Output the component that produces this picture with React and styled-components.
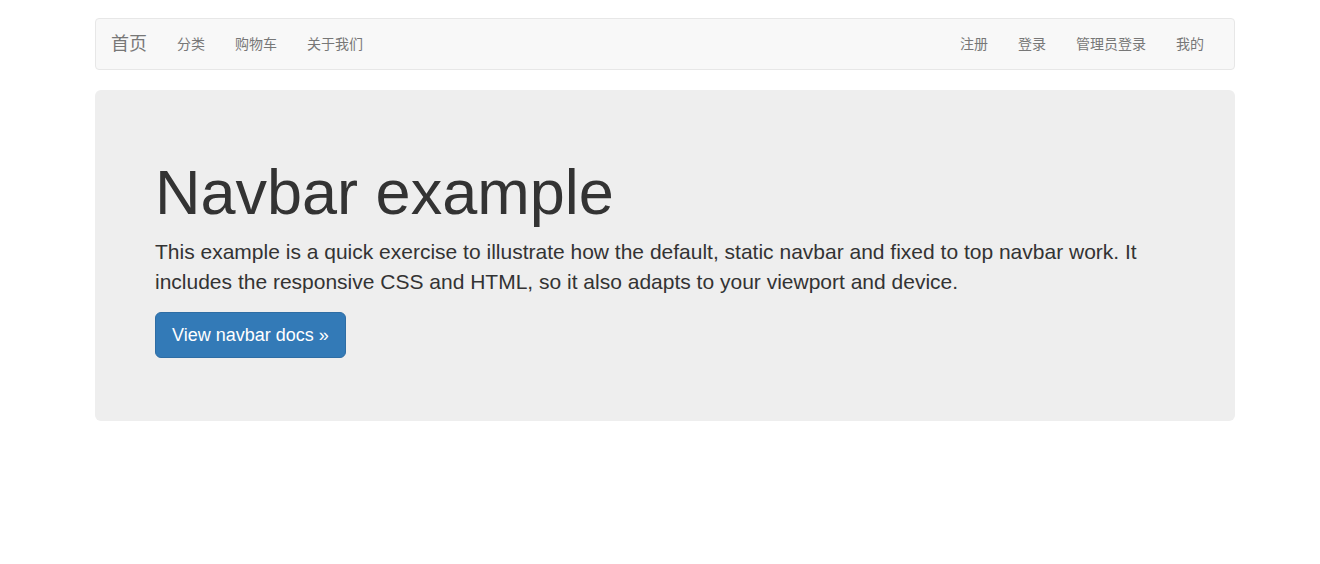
import React from 'react';
import styled, { createGlobalStyle } from 'styled-components';

const GlobalStyle = createGlobalStyle`
  * { box-sizing: border-box; }
  body {
    margin: 0;
    font-family: "Liberation Sans", Arial, "Noto Sans CJK SC", sans-serif;
    font-size: 14px;
    line-height: 1.42857143;
    color: #333;
    background: #fff;
  }
`;

const Page = styled.div`
  padding: 18px 0 0 10px;
`;

const Container = styled.div`
  width: 1140px;
  margin: 0 auto;
`;

const Navbar = styled.nav`
  display: flex;
  justify-content: space-between;
  align-items: center;
  min-height: 50px;
  padding-right: 15px;
  margin-bottom: 20px;
  background: #f8f8f8;
  border: 1px solid #e7e7e7;
  border-radius: 4px;
`;

const NavGroup = styled.ul`
  display: flex;
  margin: 0;
  padding: 0;
  list-style: none;
`;

const Brand = styled.a`
  display: block;
  padding: 15px;
  height: 50px;
  font-size: 18px;
  line-height: 20px;
  color: #777;
  text-decoration: none;
  font-family: "Liberation Sans", "Noto Sans CJK SC", sans-serif;
`;

const NavLink = styled.a`
  display: block;
  padding: 15px;
  line-height: 20px;
  font-size: 14px;
  color: #777;
  text-decoration: none;
  font-family: "Liberation Sans", "Noto Sans CJK SC", sans-serif;
`;

const Jumbotron = styled.div`
  padding: 48px 60px;
  background: #eee;
  border-radius: 6px;
`;

const Title = styled.h1`
  margin: 20px 0 10px;
  font-size: 63px;
  font-weight: 500;
  line-height: 1.1;
  color: #333;
`;

const Lead = styled.p`
  margin: 0 0 15px;
  font-size: 21px;
  line-height: 1.4286;
`;

const Button = styled.a`
  display: inline-block;
  padding: 10px 16px;
  font-size: 18px;
  line-height: 1.3333333;
  color: #fff;
  background: #337ab7;
  border: 1px solid #2e6da4;
  border-radius: 6px;
  text-decoration: none;
`;

const leftLinks = ['分类', '购物车', '关于我们'];
const rightLinks = ['注册', '登录', '管理员登录', '我的'];

const App = () => (
  <Page>
    <GlobalStyle />
    <Container>
      <Navbar>
        <NavGroup>
          <li><Brand href="#">首页</Brand></li>
          {leftLinks.map(l => <li key={l}><NavLink href="#">{l}</NavLink></li>)}
        </NavGroup>
        <NavGroup>
          {rightLinks.map(l => <li key={l}><NavLink href="#">{l}</NavLink></li>)}
        </NavGroup>
      </Navbar>
      <Jumbotron>
        <Title>Navbar example</Title>
        <Lead>
          This example is a quick exercise to illustrate how the default, static navbar and fixed to top navbar work. It includes the responsive CSS and HTML, so it also adapts to your viewport and device.
        </Lead>
        <Lead>
          <Button href="#">View navbar docs &raquo;</Button>
        </Lead>
      </Jumbotron>
    </Container>
  </Page>
);

export default App;
